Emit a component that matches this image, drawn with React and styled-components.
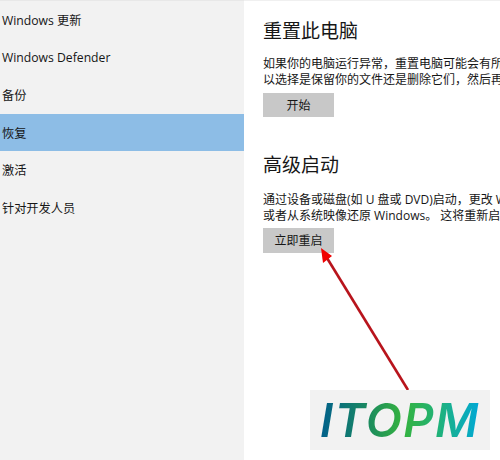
import React from "react";
import styled, { createGlobalStyle } from "styled-components";

const GlobalStyle = createGlobalStyle`
  html, body {
    margin: 0;
    padding: 0;
    background: #fff;
  }
  body {
    font-family: "Open Sans", "Noto Sans CJK SC", sans-serif;
  }
`;

const navItems = ["Windows 更新", "Windows Defender", "备份", "恢复", "激活", "针对开发人员"];

const Page = styled.div`
  position: relative;
  width: 500px;
  height: 460px;
  display: flex;
  overflow: hidden;
  background: #fff;
  color: #161616;
`;

const Sidebar = styled.nav`
  width: 244px;
  flex: none;
  background: #f2f2f2;
  border-top: 1px solid #e8e8e8;
  box-sizing: border-box;
`;

const NavItem = styled.div`
  height: 37.6px;
  display: flex;
  align-items: center;
  padding-left: 2px;
  font-size: 12.2px;
  background: ${(p) => (p.$active ? "#8dbde6" : "transparent")};
`;

const Content = styled.main`
  flex: 1;
  min-width: 0;
  padding: 18px 0 0 19px;
  border-top: 1px solid #f0f0f0;
`;

const Section = styled.section`
  margin-bottom: 35.5px;
`;

const Heading = styled.h2`
  margin: 0 0 ${(p) => p.$gap}px;
  font-size: 19px;
  line-height: 24px;
  font-weight: 400;
`;

const Text = styled.p`
  margin: 0 0 4.5px;
  font-size: 12px;
  line-height: 16px;
  white-space: nowrap;
`;

const Button = styled.button`
  display: block;
  width: 71px;
  height: 24.5px;
  padding: 0;
  border: none;
  background: #c8c8c8;
  color: #161616;
  font: inherit;
  font-size: 12px;
`;

const Arrow = styled.svg`
  position: absolute;
  left: 300px;
  top: 240px;
`;

const Watermark = styled.div`
  position: absolute;
  left: 310px;
  top: 390px;
  width: 180px;
  height: 60px;
  display: flex;
  align-items: center;
  justify-content: center;
  background: #f2f2f2;
`;

const LogoText = styled.span`
  font-family: "Inter", sans-serif;
  font-size: 47px;
  line-height: 60px;
  font-weight: 600;
  font-style: italic;
  letter-spacing: 1.5px;
  background: linear-gradient(90deg, #005f8c 0%, #1b8a5f 30%, #35b33f 52%, #1fb27c 75%, #00a8d8 100%);
  -webkit-background-clip: text;
  background-clip: text;
  color: transparent;
`;

export default function App() {
  return (
    <Page>
      <GlobalStyle />
      <Sidebar>
        {navItems.map((item) => (
          <NavItem key={item} $active={item === "恢复"}>
            {item}
          </NavItem>
        ))}
      </Sidebar>
      <Content>
        <Section>
          <Heading $gap={13}>重置此电脑</Heading>
          <Text>
            如果你的电脑运行异常，重置电脑可能会有所帮助。
            <br />
            以选择是保留你的文件还是删除它们，然后再重新安装。
          </Text>
          <Button>开始</Button>
        </Section>
        <Section>
          <Heading $gap={15}>高级启动</Heading>
          <Text>
            通过设备或磁盘(如 U 盘或 DVD)启动，更改 Windows
            <br />
            或者从系统映像还原 Windows。 这将重新启动电脑。
          </Text>
          <Button>立即重启</Button>
        </Section>
      </Content>
      <Arrow width="130" height="160" viewBox="0 0 130 160">
        <line x1="108" y1="150" x2="27" y2="18" stroke="#b8141c" strokeWidth="2.6" />
        <path d="M21 8 L32 16 L23 23 Z" fill="#f00000" />
      </Arrow>
      <Watermark>
        <LogoText>ITOPM</LogoText>
      </Watermark>
    </Page>
  );
}
